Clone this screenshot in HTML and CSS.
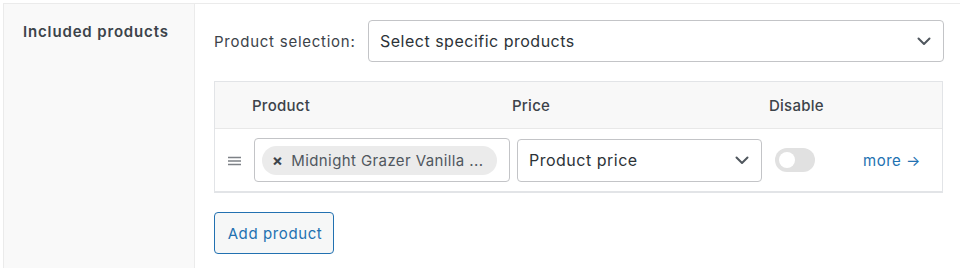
FILE: index.html
```html
<!DOCTYPE html>
<html lang="en">
<head>
  <meta charset="UTF-8" />
  <title>Included products</title>
  <link rel="stylesheet" href="styles.css">
</head>
<body>
  <div class="settings">
    <div class="settings-row">
      <div class="settings-label">Included products</div>

      <div class="settings-field">
        <div class="selection">
          <label class="selection-label">Product selection:</label>
          <div class="select select-wide">
            <span>Select specific products</span>
            <svg class="chevron" width="14" height="9" viewBox="0 0 14 9"><path d="M1.5 1.5 L7 7 L12.5 1.5" fill="none" stroke="#50575e" stroke-width="2" stroke-linecap="round" stroke-linejoin="round"/></svg>
          </div>
        </div>

        <div class="products">
          <div class="products-head">
            <div class="col-product">Product</div>
            <div class="col-price">Price</div>
            <div class="col-disable">Disable</div>
          </div>
          <div class="products-row">
            <div class="handle">
              <svg width="13" height="10" viewBox="0 0 13 10"><path d="M0 1.5h13M0 5h13M0 8.5h13" stroke="#7d8186" stroke-width="1.6"/></svg>
            </div>
            <div class="product-input">
              <span class="chip"><span class="chip-x">×</span>Midnight Grazer Vanilla ...</span>
            </div>
            <div class="select select-price">
              <span>Product price</span>
              <svg class="chevron" width="14" height="9" viewBox="0 0 14 9"><path d="M1.5 1.5 L7 7 L12.5 1.5" fill="none" stroke="#50575e" stroke-width="2" stroke-linecap="round" stroke-linejoin="round"/></svg>
            </div>
            <span class="toggle"><span class="knob"></span></span>
            <a class="more" href="#">more →</a>
          </div>
        </div>

        <button class="add-button">Add product</button>
      </div>
    </div>
  </div>
</body>
</html>
```

FILE: styles.css
```css
body {
  margin: 0;
  padding: 0;
  background: #fff;
  font-family: Inter, "Noto Sans", sans-serif;
  color: #3c434a;
}
.settings {
  padding: 3px 0 0 3px;
}
.settings-row {
  display: flex;
  border-top: 1px solid #ebebeb;
  border-left: 1px solid #ebebeb;
  min-height: 264px;
}
.settings-label {
  width: 171px;
  background: #f9f9f9;
  border-right: 1px solid #ebebeb;
  padding: 18px 0 0 19px;
  font-size: 15px;
  font-weight: 600;
  letter-spacing: 0.85px;
  color: #3c434a;
}
.settings-field {
  flex: 1;
  padding: 16px 16px 0 19px;
}
.selection {
  display: flex;
  align-items: center;
}
.selection-label {
  font-size: 15px;
  letter-spacing: 0.75px;
  width: 154px;
}
.select {
  display: flex;
  align-items: center;
  justify-content: space-between;
  box-sizing: border-box;
  border: 1px solid #c3c4c7;
  border-radius: 4px;
  background: #fff;
  font-size: 16px;
  letter-spacing: 0.5px;
  color: #2c3338;
}
.select-wide {
  width: 576px;
  height: 42px;
  padding: 0 12px 0 11px;
}
.chevron {
  display: block;
}
.products {
  margin-top: 19px;
  width: 729px;
  border: 1px solid #e2e4e7;
  border-bottom-width: 2px;
  box-sizing: border-box;
}
.products-head {
  display: flex;
  align-items: center;
  height: 46px;
  background: #f8f8f8;
  border-bottom: 1px solid #e8e8e8;
  padding-left: 37px;
  font-size: 15px;
  font-weight: 500;
  letter-spacing: 0.25px;
  color: #3c434a;
}
.col-product {
  width: 260px;
}
.col-price {
  width: 257px;
}
.products-row {
  display: flex;
  align-items: center;
  padding: 9px 0;
}
.handle {
  width: 39px;
  display: flex;
  justify-content: center;
  padding-top: 2px;
}
.handle svg {
  display: block;
}
.product-input {
  box-sizing: border-box;
  width: 256px;
  height: 44px;
  border: 1px solid #c3c4c7;
  border-radius: 4px;
  display: flex;
  align-items: center;
  padding-left: 7px;
}
.chip {
  display: inline-flex;
  align-items: center;
  height: 29px;
  padding: 0 14px 0 10px;
  border-radius: 15px;
  background: #ebebeb;
  font-size: 15px;
  letter-spacing: 0.4px;
  color: #50575e;
  white-space: nowrap;
}
.chip-x {
  font-size: 16px;
  font-weight: 700;
  margin-right: 8px;
  color: #3c434a;
}
.select-price {
  width: 245px;
  height: 43px;
  margin-left: 7px;
  padding: 0 12px 0 11px;
}
.toggle {
  width: 40px;
  height: 24px;
  margin-left: 13px;
  border-radius: 12px;
  background: #e1e1e1;
  display: flex;
  align-items: center;
  padding-left: 4px;
  box-sizing: border-box;
}
.knob {
  width: 16px;
  height: 16px;
  border-radius: 50%;
  background: #fff;
}
.more {
  margin-left: 48px;
  font-size: 15px;
  letter-spacing: 0.5px;
  color: #2271b1;
  text-decoration: none;
}
.add-button {
  display: block;
  margin-top: 19px;
  width: 120px;
  height: 42px;
  border: 1px solid #2271b1;
  border-radius: 4px;
  background: #f6f7f7;
  color: #2271b1;
  font-family: inherit;
  font-size: 15px;
  letter-spacing: 0.6px;
  padding: 0 0 0 2px;
}
```
